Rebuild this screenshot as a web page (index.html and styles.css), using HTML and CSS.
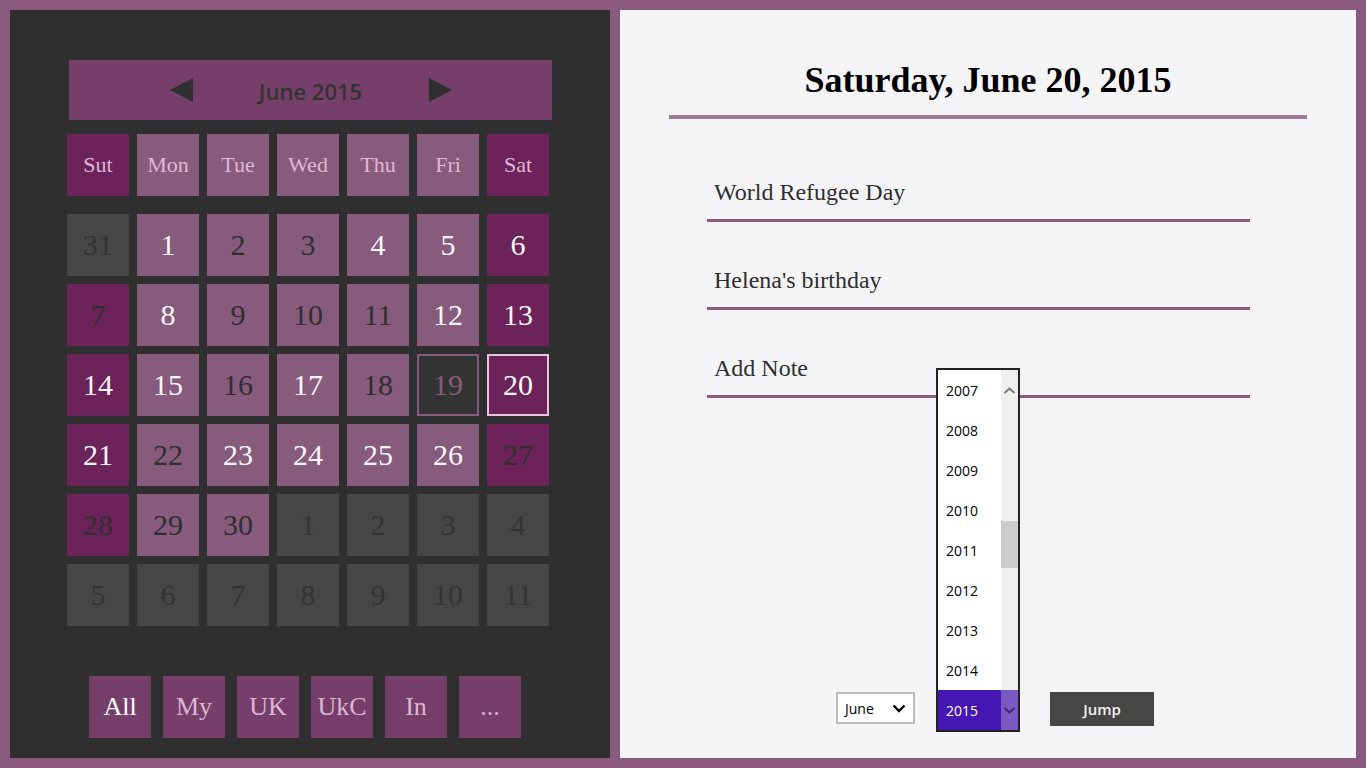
FILE: index.html
```html
<!DOCTYPE html>
<html lang="en">
<head>
<meta charset="utf-8">
<title>Calendar</title>
<link rel="stylesheet" href="styles.css">
</head>
<body>
<div class="app">
  <section class="left">
    <div class="month-bar">
      <span class="arrow arrow-left"></span>
      <span class="month-title">June 2015</span>
      <span class="arrow arrow-right"></span>
    </div>
    <div class="grid days">
      <div class="cell wkend hdr">Sut</div>
      <div class="cell wkday hdr">Mon</div>
      <div class="cell wkday hdr">Tue</div>
      <div class="cell wkday hdr">Wed</div>
      <div class="cell wkday hdr">Thu</div>
      <div class="cell wkday hdr">Fri</div>
      <div class="cell wkend hdr">Sat</div>
    </div>
    <div class="grid dates">
      <div class="cell other">31</div>
      <div class="cell wkday lt">1</div>
      <div class="cell wkday dk">2</div>
      <div class="cell wkday dk">3</div>
      <div class="cell wkday lt">4</div>
      <div class="cell wkday lt">5</div>
      <div class="cell wkend lt">6</div>

      <div class="cell wkend dk">7</div>
      <div class="cell wkday lt">8</div>
      <div class="cell wkday dk">9</div>
      <div class="cell wkday dk">10</div>
      <div class="cell wkday dk">11</div>
      <div class="cell wkday lt">12</div>
      <div class="cell wkend lt">13</div>

      <div class="cell wkend lt">14</div>
      <div class="cell wkday lt">15</div>
      <div class="cell wkday dk">16</div>
      <div class="cell wkday lt">17</div>
      <div class="cell wkday dk">18</div>
      <div class="cell today">19</div>
      <div class="cell wkend lt selected">20</div>

      <div class="cell wkend lt">21</div>
      <div class="cell wkday dk">22</div>
      <div class="cell wkday lt">23</div>
      <div class="cell wkday lt">24</div>
      <div class="cell wkday lt">25</div>
      <div class="cell wkday lt">26</div>
      <div class="cell wkend dk">27</div>

      <div class="cell wkend dk">28</div>
      <div class="cell wkday dk">29</div>
      <div class="cell wkday dk">30</div>
      <div class="cell other">1</div>
      <div class="cell other">2</div>
      <div class="cell other">3</div>
      <div class="cell other">4</div>

      <div class="cell other">5</div>
      <div class="cell other">6</div>
      <div class="cell other">7</div>
      <div class="cell other">8</div>
      <div class="cell other">9</div>
      <div class="cell other">10</div>
      <div class="cell other">11</div>
    </div>
    <div class="filters">
      <div class="filter active">All</div>
      <div class="filter">My</div>
      <div class="filter">UK</div>
      <div class="filter">UkC</div>
      <div class="filter">In</div>
      <div class="filter">...</div>
    </div>
  </section>

  <section class="right">
    <h1 class="date-title">Saturday, June 20, 2015</h1>
    <div class="notes">
      <div class="note">World Refugee Day</div>
      <div class="note">Helena's birthday</div>
      <div class="note">Add Note</div>
    </div>
    <div class="controls">
      <div class="month-select">
        <span>June</span>
        <svg class="chev" width="14" height="9" viewBox="0 0 14 9"><path d="M1.5 1.5 L7 7 L12.5 1.5" fill="none" stroke="#000" stroke-width="2.4"/></svg>
      </div>
      <div class="year-wrap">
        <div class="year-list">
          <div class="years">
            <div class="year">2007</div>
            <div class="year">2008</div>
            <div class="year">2009</div>
            <div class="year">2010</div>
            <div class="year">2011</div>
            <div class="year">2012</div>
            <div class="year">2013</div>
            <div class="year">2014</div>
            <div class="year current">2015</div>
          </div>
          <div class="scrollbar">
            <svg class="sb-up" width="17" height="14" viewBox="0 0 17 14"><path d="M3.5 9 L8.5 4.5 L13.5 9" fill="none" stroke="#777" stroke-width="2"/></svg>
            <div class="sb-thumb"></div>
            <div class="sb-down"><svg width="17" height="14" viewBox="0 0 17 14"><path d="M3.5 5 L8.5 9.5 L13.5 5" fill="none" stroke="#3a2a6a" stroke-width="2"/></svg></div>
          </div>
        </div>
      </div>
      <button class="jump">Jump</button>
    </div>
  </section>
</div>
</body>
</html>
```

FILE: styles.css
```css
* { box-sizing: border-box; }
html, body { margin: 0; padding: 0; }
body {
  background: #895a7c;
  width: 1366px;
  height: 768px;
  overflow: hidden;
}
.app {
  display: flex;
  gap: 10px;
  padding: 10px;
  height: 768px;
}
.left {
  width: 600px;
  background: #2f2f2f;
  display: flex;
  flex-direction: column;
  padding-top: 50px;
}
.month-bar {
  margin-left: 59px;
  width: 483px;
  height: 60px;
  background: #763f6a;
  display: flex;
  align-items: center;
  justify-content: center;
  gap: 0;
}
.arrow {
  width: 0;
  height: 0;
  border-top: 12px solid transparent;
  border-bottom: 12px solid transparent;
}
.arrow-left { border-right: 23px solid #2f2f2f; }
.arrow-right { border-left: 23px solid #2f2f2f; }
.month-title {
  font-family: "Open Sans", "Noto Sans", sans-serif;
  font-weight: 600;
  font-size: 22px;
  line-height: 26px;
  padding-top: 2px;
  color: #333;
  width: 236px;
  text-align: center;
}
.grid {
  margin-left: 57px;
  display: grid;
  grid-template-columns: repeat(7, 62px);
  grid-auto-rows: 62px;
  gap: 8px;
}
.days { margin-top: 14px; }
.dates { margin-top: 18px; }
.cell {
  display: flex;
  align-items: center;
  justify-content: center;
  font-family: "Liberation Serif", "Times New Roman", serif;
  font-size: 30px;
  color: #2f2f2f;
}
.cell.hdr {
  font-size: 22px;
  color: #e0b6d8;
}
.wkday { background: #875b7c; }
.wkend { background: #6b2359; }
.other { background: #464646; color: #333; }
.lt { color: #fbf6fa; }
.dk { color: #2f2f2f; }
.today {
  background: #333;
  border: 2px solid #875b7c;
  color: #875b7c;
}
.selected {
  border: 2px solid #e6c6df;
}
.filters {
  margin-top: 50px;
  margin-left: 79px;
  display: flex;
  gap: 12px;
}
.filter {
  width: 62px;
  height: 62px;
  background: #763f6a;
  display: flex;
  align-items: center;
  justify-content: center;
  font-family: "Liberation Serif", "Times New Roman", serif;
  font-size: 26px;
  color: #dcb6d4;
}
.filter.active { color: #fff; }

.right {
  flex: 1;
  background: #f5f5f7;
  display: flex;
  flex-direction: column;
  padding: 0 0 32px 0;
}
.date-title {
  margin: 50px 49px 0;
  height: 59px;
  border-bottom: 4px solid #9c7a95;
  font-family: "Liberation Serif", "Times New Roman", serif;
  font-weight: bold;
  font-size: 36px;
  line-height: 40px;
  text-align: center;
  color: #000;
}
.notes {
  margin: 62px 0 0 87px;
  width: 543px;
  display: flex;
  flex-direction: column;
  gap: 47px;
}
.note {
  height: 41px;
  padding-left: 7px;
  border-bottom: 3px solid #8a5b7d;
  font-family: "Liberation Serif", "Times New Roman", serif;
  font-size: 24px;
  line-height: 22px;
  color: #2f2f2f;
}
.controls {
  margin-top: auto;
  margin-left: 216px;
  display: flex;
  align-items: flex-start;
  font-family: "Open Sans", "Noto Sans", sans-serif;
}
.month-select {
  width: 79px;
  height: 32px;
  border: 2px solid #bcbcbc;
  background: #fff;
  display: flex;
  align-items: center;
  justify-content: space-between;
  padding: 0 7px 0 7px;
  font-size: 14px;
  color: #000;
}
.year-wrap {
  position: relative;
  margin-left: 21px;
  width: 84px;
  height: 32px;
}
.year-list {
  position: absolute;
  left: 0;
  bottom: -8px;
  width: 84px;
  height: 364px;
  border: 2px solid #222;
  background: #fff;
  display: flex;
}
.years {
  flex: 1;
  display: flex;
  flex-direction: column;
}
.year {
  height: 40px;
  display: flex;
  align-items: center;
  padding-left: 8px;
  font-size: 14px;
  color: #000;
}
.year.current {
  background: #4616b4;
  color: #fff;
}
.scrollbar {
  width: 17px;
  background: #efefef;
  position: relative;
  display: flex;
  flex-direction: column;
}
.sb-up { margin-top: 14px; }
.sb-thumb {
  margin-top: 123px;
  height: 47px;
  background: #cdcdcd;
}
.sb-down {
  margin-top: auto;
  height: 40px;
  background: #7a5ac0;
  display: flex;
  align-items: center;
}
.jump {
  margin-left: 30px;
  width: 104px;
  height: 34px;
  border: 0;
  background: #464646;
  color: #f2f2f2;
  font-family: "Open Sans", "Noto Sans", sans-serif;
  font-weight: 600;
  font-size: 15px;
  padding: 0;
}
```
